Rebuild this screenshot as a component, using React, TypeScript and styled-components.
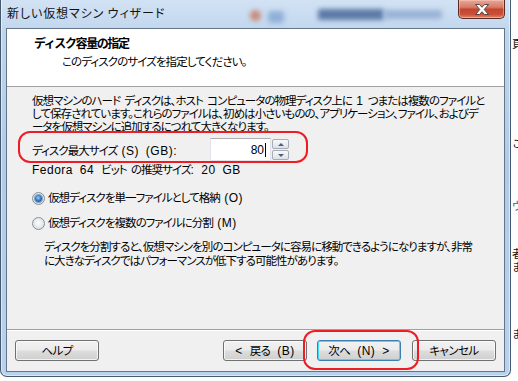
import React from 'react';
import styled, { createGlobalStyle } from 'styled-components';

const Global = createGlobalStyle`
  html, body { margin: 0; padding: 0; background: #fcfcfc; }
  body {
    width: 518px; height: 381px; overflow: hidden;
    font-family: "Liberation Sans", "Noto Sans CJK JP", sans-serif;
    font-size: 12px; color: #000;
  }
  * { box-sizing: border-box; }
`;

const Desktop = styled.div`
  position: relative;
  width: 518px;
  height: 381px;
  display: flex;
  align-items: flex-start;
  overflow: hidden;
  background: #fcfcfc;
`;

const Window = styled.div`
  flex: none;
  width: 511px;
  height: 377px;
  border: 1px solid #44586e;
  border-top: none;
  border-radius: 0 0 7px 7px;
  background: linear-gradient(180deg, #d2e2f4 0%, #bfd5ed 9%, #b0cbe8 45%, #b9d1ec 100%);
  box-shadow: inset 1px 0 0 rgba(255,255,255,0.55), inset -1px 0 0 rgba(255,255,255,0.55), inset 0 -1px 0 rgba(255,255,255,0.5);
  padding: 0 5px 4px 5px;
  display: flex;
  flex-direction: column;
`;

const TitleBar = styled.div`
  position: relative;
  height: 28px;
  flex: none;
  display: flex;
  align-items: flex-start;
`;

const Blur = styled.div<{ $l: number; $t: number; $w: number; $h: number; $c: string; $r?: number }>`
  position: absolute;
  left: ${p => p.$l}px;
  top: ${p => p.$t}px;
  width: ${p => p.$w}px;
  height: ${p => p.$h}px;
  background: ${p => p.$c};
  border-radius: ${p => p.$r ?? 2}px;
  filter: blur(2.5px);
`;

const Title = styled.div`
  position: relative;
  padding: 5px 0 0 1px;
  font-family: "Noto Sans CJK JP", sans-serif;
  font-size: 12px;
  line-height: 16px;
  color: #111;
  font-feature-settings: "palt";
  letter-spacing: 0.9px;
`;

const CloseBtn = styled.div`
  position: relative;
  margin-left: auto;
  width: 47px;
  height: 19px;
  border: 1px solid #5b2a22;
  border-top: none;
  border-radius: 0 0 5px 5px;
  background: linear-gradient(180deg, #e9a899 0%, #d77a66 40%, #c4452e 52%, #c9503a 80%, #e08a6e 100%);
  box-shadow: inset 0 0 0 1px rgba(255, 210, 200, 0.45);
  display: flex;
  align-items: center;
  justify-content: center;
`;

const Client = styled.div`
  flex: 1;
  border: 1px solid #647589;
  background: #f0f0f0;
  display: flex;
  flex-direction: column;
`;

const Header = styled.div`
  flex: none;
  height: 58px;
  background: #fff;
  border-bottom: 1px solid #a0a0a0;
  padding: 7px 0 0 27px;
`;

const HeaderTitle = styled.div`
  font-family: "Noto Sans CJK JP", sans-serif;
  font-weight: 700;
  font-size: 12px;
  line-height: 14px;
  letter-spacing: -1.4px;
`;

const HeaderSub = styled.div`
  margin: 5px 0 0 28px;
  font-size: 11.5px;
  line-height: 14px;
  letter-spacing: -0.9px;
  font-feature-settings: "palt";
`;

const Body = styled.div`
  flex: 1;
  padding: 8px 0 0 25px;
  display: flex;
  flex-direction: column;
  align-items: flex-start;
  font-size: 11.5px;
  letter-spacing: -0.95px;
  word-spacing: 2px;
  font-feature-settings: "palt";
`;

const Lat = styled.span`
  font-family: "Liberation Sans", sans-serif;
  font-size: 12px;
  letter-spacing: 0.5px;
  word-spacing: 3px;
`;

const Text = styled.div<{ $mt?: number; $ml?: number; $lh?: number }>`
  margin-top: ${p => p.$mt ?? 0}px;
  margin-left: ${p => p.$ml ?? 0}px;
  line-height: ${p => p.$lh ?? 13}px;
  white-space: nowrap;
`;

const SizeRow = styled.div`
  margin-top: 4px;
  height: 23px;
  display: flex;
  align-items: center;
`;

const SizeLabel = styled.div`
  width: 178px;
  white-space: nowrap;
  padding-top: 1px;
`;

const Input = styled.div`
  width: 61px;
  height: 23px;
  background: #fff;
  border: 1px solid #e2e3ea;
  border-top-color: #abadb3;
  display: flex;
  align-items: center;
  justify-content: flex-end;
  padding-right: 4px;
  font-size: 12px;
  letter-spacing: 0;
`;

const Caret = styled.span`
  display: inline-block;
  width: 1px;
  height: 14px;
  background: #000;
  margin-left: 1px;
`;

const Spinner = styled.div`
  width: 18px;
  height: 23px;
  display: flex;
  flex-direction: column;
  padding: 1px 0 1px 1px;
  gap: 1px;
`;

const SpinBtn = styled.div`
  flex: 1;
  border: 1px solid #a5adb8;
  border-radius: 2px;
  background: linear-gradient(180deg, #f8f8f8 0%, #eceef1 50%, #dde1e6 100%);
  display: flex;
  align-items: center;
  justify-content: center;
`;

const Arrow = styled.div<{ $down?: boolean }>`
  width: 0;
  height: 0;
  border-left: 3px solid transparent;
  border-right: 3px solid transparent;
  ${p => p.$down ? 'border-top: 3px solid #4c607e;' : 'border-bottom: 3px solid #4c607e;'}
`;

const RadioRow = styled.div<{ $mt: number }>`
  margin-top: ${p => p.$mt}px;
  height: 14px;
  display: flex;
  align-items: center;
  gap: 3px;
  white-space: nowrap;
  line-height: 14px;
`;

const RadioCircle = styled.span`
  width: 13px;
  height: 13px;
  border-radius: 50%;
  border: 1px solid #8a9099;
  background: radial-gradient(circle at 50% 45%, #fdfdfd 0%, #e4e8ee 55%, #c7ced8 100%);
  display: flex;
  align-items: center;
  justify-content: center;
  flex: none;
`;

const RadioDot = styled.span`
  width: 7px;
  height: 7px;
  border-radius: 50%;
  background: radial-gradient(circle at 45% 40%, #9fd3f6 0%, #2f7fc8 45%, #123f7e 100%);
  box-shadow: 0 0 0 1px rgba(40, 80, 130, 0.5);
`;

const Footer = styled.div`
  flex: none;
  height: 42px;
  border-top: 1px solid #a0a0a0;
  box-shadow: inset 0 1px 0 #fff;
  padding: 10px 8px 0 8px;
  display: flex;
  align-items: flex-start;
`;

const Button = styled.div<{ $primary?: boolean; $ml?: number }>`
  margin-left: ${p => p.$ml ?? 0}px;
  width: 84px;
  height: 21px;
  border: 1px solid ${p => p.$primary ? '#3c7fb1' : '#707070'};
  border-radius: 3px;
  background: linear-gradient(180deg, #f2f2f2 0%, #ebebeb 48%, #dddddd 52%, #cfcfcf 100%);
  box-shadow: inset 0 0 0 1px ${p => p.$primary ? '#48d8fb' : 'rgba(255,255,255,0.7)'};
  display: flex;
  align-items: center;
  justify-content: center;
  font-size: 11.5px;
  line-height: 14px;
  letter-spacing: -0.6px;
  white-space: pre;
  font-feature-settings: "palt";
`;

const Mark = styled.div<{ $l: number; $t: number; $w: number; $h: number }>`
  position: absolute;
  left: ${p => p.$l}px;
  top: ${p => p.$t}px;
  width: ${p => p.$w}px;
  height: ${p => p.$h}px;
  border: 2.5px solid #ee1c24;
  border-radius: 12px;
  pointer-events: none;
`;

const Backdrop = styled.div`
  flex: 1;
  align-self: stretch;
  overflow: hidden;
  display: flex;
  flex-direction: column;
  padding-left: 1px;
  background: #fdfdfd;
`;

const Frag = styled.div<{ $mt: number; $c?: string }>`
  margin-top: ${p => p.$mt}px;
  font-family: "Noto Sans CJK JP", sans-serif;
  font-size: 11px;
  line-height: 11px;
  height: 11px;
  color: ${p => p.$c ?? '#111'};
  white-space: nowrap;
`;

export default function App() {
  return (
    <>
      <Global />
      <Desktop>
        <Window>
          <TitleBar>
            <Blur $l={244} $t={10} $w={11} $h={11} $c="#c98a78" $r={6} />
            <Blur $l={262} $t={11} $w={16} $h={12} $c="#8fb0d8" $r={3} />
            <Blur $l={312} $t={9} $w={66} $h={11} $c="#5c7aa6" />
            <Blur $l={378} $t={10} $w={58} $h={9} $c="#98b3d6" />
            <Title>新しい仮想マシン ウィザード</Title>
            <CloseBtn>
              <svg width="14" height="11" viewBox="0 0 14 11">
                <polygon
                  points="0.5,0.5 4.5,0.5 7,3.3 9.5,0.5 13.5,0.5 9.2,5.5 13.5,10.5 9.5,10.5 7,7.7 4.5,10.5 0.5,10.5 4.8,5.5"
                  fill="#ffffff"
                  stroke="#4a3a38"
                  strokeWidth="0.9"
                  strokeLinejoin="round"
                />
              </svg>
            </CloseBtn>
          </TitleBar>
          <Client>
            <Header>
              <HeaderTitle>ディスク容量の指定</HeaderTitle>
              <HeaderSub>このディスクのサイズを指定してください。</HeaderSub>
            </Header>
            <Body>
              <Text>仮想マシンのハード ディスクは、ホスト コンピュータの物理ディスク上に <Lat>1</Lat> つまたは複数のファイルと</Text>
              <Text>して保存されています。これらのファイルは、初めは小さいものの、アプリケーション、ファイル、およびデ</Text>
              <Text>ータを仮想マシンに追加するにつれて大きくなります。</Text>
              <SizeRow>
                <SizeLabel>ディスク最大サイズ <Lat>(S) (GB):</Lat></SizeLabel>
                <Input>
                  80<Caret />
                </Input>
                <Spinner>
                  <SpinBtn><Arrow /></SpinBtn>
                  <SpinBtn><Arrow $down /></SpinBtn>
                </Spinner>
              </SizeRow>
              <Text $mt={3}><Lat>Fedora 64 </Lat>ビット の推奨サイズ<Lat>: 20 GB</Lat></Text>
              <RadioRow $mt={14}>
                <RadioCircle><RadioDot /></RadioCircle>
                <span>仮想ディスクを単一ファイルとして格納 <Lat>(O)</Lat></span>
              </RadioRow>
              <RadioRow $mt={11}>
                <RadioCircle />
                <span>仮想ディスクを複数のファイルに分割 <Lat>(M)</Lat></span>
              </RadioRow>
              <Text $mt={10} $ml={12} $lh={14}>ディスクを分割すると、仮想マシンを別のコンピュータに容易に移動できるようになりますが、非常</Text>
              <Text $ml={12} $lh={14}>に大きなディスクではパフォーマンスが低下する可能性があります。</Text>
            </Body>
            <Footer>
              <Button>ヘルプ</Button>
              <Button $ml={124}><Lat>{'< '}</Lat>戻る<Lat>{' (B)'}</Lat></Button>
              <Button $primary $ml={10}>次へ<Lat>{' (N) >'}</Lat></Button>
              <Button $ml={11}>キャンセル</Button>
            </Footer>
          </Client>
        </Window>
        <Backdrop>
          <Frag $mt={38}>頁</Frag>
          <Frag $mt={89}>こ</Frag>
          <Frag $mt={51} $c="#3a5a8c">ヴ</Frag>
          <Frag $mt={37}>者</Frag>
          <Frag $mt={2}>ま</Frag>
          <Frag $mt={56}>ま</Frag>
        </Backdrop>
        <Mark $l={18} $t={131} $w={290} $h={32} />
        <Mark $l={303} $t={330} $w={116} $h={40} />
      </Desktop>
    </>
  );
}
